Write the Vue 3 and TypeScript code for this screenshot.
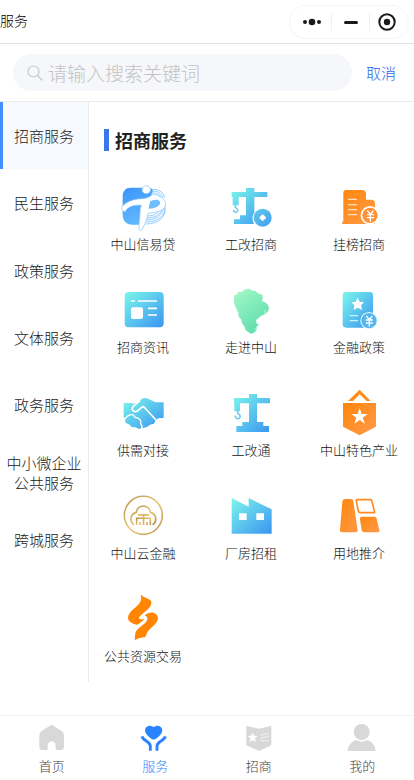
<script setup lang="ts">
import { ref } from 'vue'

interface Service {
  icon: string
  label: string
}

const keyword = ref('')
const activeCategory = ref(0)
const activeTab = ref(1)

const categories: string[][] = [
  ['招商服务'],
  ['民生服务'],
  ['政策服务'],
  ['文体服务'],
  ['政务服务'],
  ['中小微企业', '公共服务'],
  ['跨城服务'],
]

const services: Service[] = [
  { icon: 'credit', label: '中山信易贷' },
  { icon: 'crane-coin', label: '工改招商' },
  { icon: 'building', label: '挂榜招商' },
  { icon: 'news', label: '招商资讯' },
  { icon: 'map', label: '走进中山' },
  { icon: 'policy', label: '金融政策' },
  { icon: 'handshake', label: '供需对接' },
  { icon: 'crane', label: '工改通' },
  { icon: 'badge', label: '中山特色产业' },
  { icon: 'cloud', label: '中山云金融' },
  { icon: 'factory', label: '厂房招租' },
  { icon: 'land', label: '用地推介' },
  { icon: 'trade', label: '公共资源交易' },
]

const tabs: Service[] = [
  { icon: 'home', label: '首页' },
  { icon: 'care', label: '服务' },
  { icon: 'invest', label: '招商' },
  { icon: 'user', label: '我的' },
]
</script>

<template>
  <div class="page">
    <svg class="sprite" aria-hidden="true">
      <defs>
        <linearGradient id="g-blue" x1="0" y1="0" x2="1" y2="1">
          <stop offset="0" stop-color="#7bf7ea" />
          <stop offset="1" stop-color="#3b94f2" />
        </linearGradient>
        <linearGradient id="g-coin" x1="0" y1="0" x2="1" y2="1">
          <stop offset="0" stop-color="#62cdea" />
          <stop offset="1" stop-color="#429cf0" />
        </linearGradient>
        <linearGradient id="g-green" x1="0" y1="0" x2="0.6" y2="1">
          <stop offset="0" stop-color="#a5fac6" />
          <stop offset="1" stop-color="#60dcae" />
        </linearGradient>
        <linearGradient id="g-orange" x1="0" y1="0" x2="1" y2="1">
          <stop offset="0" stop-color="#ff860c" />
          <stop offset="1" stop-color="#ff9a4a" />
        </linearGradient>
        <linearGradient id="g-sky" x1="0" y1="0" x2="0.4" y2="1">
          <stop offset="0" stop-color="#3b93fb" />
          <stop offset="1" stop-color="#62b9ff" />
        </linearGradient>
        <linearGradient id="g-gold" x1="0" y1="0" x2="1" y2="1">
          <stop offset="0" stop-color="#b98b45" />
          <stop offset="0.5" stop-color="#e9c878" />
          <stop offset="1" stop-color="#b98b45" />
        </linearGradient>
      </defs>

      <symbol id="credit" viewBox="42 24 144 144">
        <g fill="none" stroke="#7cc3ff" stroke-width="2.5">
          <path d="M136 44c22-4 39 6 43 24M138 49c19-3 32 6 36 20M140 54c15-2 26 5 29 17" />
          <path d="M181 100c0 24-16 46-58 47M180 92c1 28-16 48-56 49M175 98c-3 22-19 36-51 37M170 104c-5 15-18 25-45 25M160 111c-7 8-17 12-34 12" />
        </g>
        <path d="M78 38h54c7 0 11 4 11 11l-18 54-7 46H83c-21 0-30-12-30-32V66c0-18 8-28 25-28Z" fill="url(#g-sky)" />
        <g fill="#fff" stroke="#7cc3ff" stroke-width="2" stroke-linejoin="round">
          <path d="M50 97c10-16 34-25 60-26 14 0 25-5 34-14 20 5 38 15 38 30 0 17-22 26-52 27-3 17-11 35-19 50-3 4-8 3-9-1-2-14 3-32 3-48 0-8 1-17 4-24-16-2-30 1-39 8-6 5-9 7-7 12-10-2-15-8-13-14Z" />
          <ellipse cx="124" cy="44" rx="13" ry="12" />
        </g>
        <path d="M130 101l6-22c7-5 26-9 29 2 2 12-14 20-35 20Z" fill="#6fbdff" />
      </symbol>

      <symbol id="crane-coin" viewBox="36 24 144 144">
        <path d="M50 51h43V39h25v12h39v15h-39v47c-7 9-7 22-1 34H57v-14h18v-12h18V66H71v25H53V66h-3Z" fill="url(#g-blue)" />
        <path d="M61 90v7c7 4 9 8 6 12-4 6-13 1-11-4" fill="none" stroke="#6acdf0" stroke-width="4.5" />
        <circle cx="143" cy="128" r="27" fill="url(#g-coin)" />
        <path d="m143 120 8 8-8 8-8-8Z" fill="#fff" stroke="#fff" stroke-width="4" stroke-linejoin="round" />
      </symbol>

      <symbol id="building" viewBox="60 24 144 144">
        <path d="M94 45h47q12 0 12 12v17h16q11 0 11 12v61H81q0-7 4-9V55q0-10 9-10Z" fill="url(#g-orange)" />
        <path d="M100 73h24M100 89h24M100 104h24M100 119h24" stroke="#ffe2c4" stroke-width="4" stroke-linecap="round" />
        <circle cx="165" cy="121" r="28" fill="#fff" />
        <circle cx="165" cy="121" r="23" fill="#ff9137" />
        <path d="m158 108 8 10 8-10M166 118v20M157 119h19M157 128h19" fill="none" stroke="#fff" stroke-width="4" stroke-linecap="round" />
      </symbol>

      <symbol id="news" viewBox="42 18 144 144">
        <rect x="59" y="36" width="117" height="106" rx="12" fill="url(#g-blue)" />
        <path d="M78 63h12M99 63h57M129 85h27M129 105h27" stroke="#fff" stroke-width="5" />
        <rect x="78" y="82" width="36" height="35" rx="6" fill="#fff" />
      </symbol>

      <symbol id="map" viewBox="366 18 144 144">
        <path d="m388 46 8-1 4-9 10 1 8-7 13-4 10 6 10 1 9 8 12 4 1 11-3 8 7 2 10 6 5 11-3 11-9 9-12 4-8 8-7 5 1 9 8 7-7 2-1 11-5 8-10 4-8-4-9-7-3-10-7-9-3-12-8-10-1-11-5-11-5-10-3-12Z" fill="url(#g-green)" stroke="#98eec3" stroke-linejoin="round" />
        <path d="M480 90v15M448 147h4" stroke="#edfff7" stroke-width="2" />
      </symbol>

      <symbol id="policy" viewBox="120 18 144 144">
        <path d="M153 36h72q9 0 9 9v98h-81q-10 0-10-10V46q0-10 10-10Z" fill="url(#g-blue)" />
        <path d="m188 53 6 12 13 2-9 9 3 14-13-7-12 7 2-14-9-9 13-2Z" fill="#fff" />
        <path d="M166 107h22M166 122h22" stroke="#c8f4fa" stroke-width="4" stroke-linecap="round" />
        <circle cx="222" cy="122" r="26" fill="#e8fbff" />
        <circle cx="222" cy="122" r="23" fill="#57b7ed" />
        <path d="m215 109 8 10 8-10M223 119v19M214 120h18M214 129h18" fill="none" stroke="#fff" stroke-width="4" stroke-linecap="round" />
      </symbol>

      <symbol id="handshake" viewBox="42 27 144 144">
        <path d="M56 69h22l8 2 12-3 12-11q7-4 16-2l26 12h24v47l-16 1-8 6-5 10-12 3-8 6-14 5-13 1-8-4-12-1-8-8-10-4-2-9 3-6-7-1Z" fill="url(#g-blue)" />
        <path d="M105 62 84 80c-7 9 3 19 13 13l16-13 4 1 36 39" fill="none" stroke="#fff" stroke-width="5" stroke-linejoin="round" />
        <path d="M60 116c11-14 25-17 30-4 14 2 19 9 17 19 5 5 6 9 3 17" fill="none" stroke="#fff" stroke-width="4" />
      </symbol>

      <symbol id="crane" viewBox="366 27 144 144">
        <path d="M387 54h45V42h24v12h39v16h-39v56h19v12h17v18h-98v-18h18v-12h20V70h-27v24h-17V70h-1Z" fill="url(#g-blue)" />
        <path d="M398 91v9c7 4 9 7 7 12-3 7-15 4-14-5" fill="none" stroke="#66c9f1" stroke-width="4.5" />
      </symbol>

      <symbol id="badge" viewBox="105 27 144 144">
        <path d="m144 63 35-34 33 34h-12l-21-20-20 20Z" fill="#ff8b19" />
        <path d="M129 69h99v71l-49 26-50-26Z" fill="url(#g-orange)" />
        <path d="m179 84 6 18h18l-15 11 7 18-16-11-16 11 6-18-15-11h19Z" fill="#fff" />
      </symbol>

      <symbol id="cloud" viewBox="57 21 144 144">
        <g fill="none" stroke="url(#g-gold)">
          <circle cx="130" cy="91" r="57" stroke-width="4.5" />
          <path d="M102 119c-14-8-12-33 7-37 3-25 39-25 42 0 19 4 21 29 7 37" stroke-width="5" />
          <path d="M110 120v-20h41v20M120 120v-9M141 120v-9" stroke-width="4.5" />
        </g>
        <path d="M114 87h33v5h-14v28h-5V92h-14Z" fill="#ddb665" />
      </symbol>

      <symbol id="factory" viewBox="381 21 144 144">
        <path d="m395 39 51 26V39l69 34v73H395Z" fill="url(#g-blue)" />
        <path d="M417 85h23v20h-23ZM469 85h23v20h-23Z" fill="#fff" />
      </symbol>

      <symbol id="land" viewBox="105 336 144 144">
        <path d="M134 357h18q7 0 8 6l13 88q1 6-5 6h-42q-7 0-6-7l7-85q1-8 7-8Z" fill="url(#g-orange)" />
        <path d="M171 359h39q5 0 6 5l8 34h-43q-5 0-6-5l-6-29q-1-5 2-5Z" fill="#fff" stroke="#ff8c21" stroke-width="5" stroke-linejoin="round" />
        <path d="M186 410h37q6 0 7 6l8 34q1 7-6 7h-39q-7 0-8-6l-5-33q-1-8 6-8Z" fill="url(#g-orange)" />
      </symbol>

      <symbol id="trade" viewBox="57 330 144 144">
        <g fill="#ff8503">
          <path d="M121 328C130 337 145 340 153 347C157 358 150 368 140 376L121 392C115 397 117 402 122 403L134 403L113 419C98 417 84 410 84 398C85 386 95 376 108 366C122 354 127 343 121 328Z" />
          <path d="M134 391C142 385 150 382 160 383C170 386 176 394 173 404C170 415 158 424 148 434C140 441 140 450 135 457C124 457 113 460 104 466C105 455 104 445 109 437C116 428 130 420 138 411C144 403 144 396 134 391Z" />
        </g>
      </symbol>

      <symbol id="home" viewBox="107 51 96 96">
        <path d="M149 62q5-4 10 0l25 16q7 5 7 14v33q0 10-11 10h-14v-13c0-18-24-18-24 0v13h-14q-11 0-11-10V92q0-9 7-14Z" fill="currentColor" />
      </symbol>

      <symbol id="care" viewBox="418 51 96 96">
        <path d="M462 67c15-13 34 3 22 20-6 8-16 16-22 17-6-1-16-9-22-17-12-17 7-33 22-20Z" fill="currentColor" />
        <path d="M427 94c3 14 25 15 25 29v14M497 94c-3 14-25 15-25 29v14" fill="none" stroke="currentColor" stroke-width="8.5" />
      </symbol>

      <symbol id="invest" viewBox="728 51 96 96">
        <path d="m738 62 38 9 37-9v59q-17 8-37 17-20-9-38-17Z" fill="currentColor" />
        <path d="m757 85 4 8 9 1-7 6 2 9-8-4-8 4 2-9-7-6 9-1ZM781 91l24-6M781 100l24-6M781 107h24" fill="#fff" stroke="#fff" stroke-width="2" />
      </symbol>

      <symbol id="user" viewBox="1039 51 96 96">
        <circle cx="1086" cy="81" r="24" fill="currentColor" />
        <path d="M1044 138c1-17 11-28 26-33 10 6 22 6 32 0 15 5 25 16 26 33Z" fill="currentColor" />
      </symbol>
    </svg>

    <header class="titlebar">
      <h1>服务</h1>
      <div class="capsule">
        <button type="button" aria-label="更多">
          <svg viewBox="0 0 20 20"><circle cx="3" cy="10" r="2" /><circle cx="10" cy="10" r="3.3" /><circle cx="17" cy="10" r="2" /></svg>
        </button>
        <button type="button" aria-label="最小化">
          <svg viewBox="0 0 20 20"><rect x="3" y="9" width="14" height="3" rx="1.5" /></svg>
        </button>
        <button type="button" aria-label="关闭">
          <svg viewBox="0 0 20 20"><circle cx="10" cy="10" r="7.7" fill="none" stroke="#1a1a1a" stroke-width="2" /><circle cx="10" cy="10" r="3.2" /></svg>
        </button>
      </div>
    </header>

    <form class="search" @submit.prevent>
      <label class="field">
        <svg viewBox="0 0 16 16" fill="none" stroke="#c8c8c8" stroke-width="1.2">
          <circle cx="6.5" cy="6.5" r="5.5" />
          <path d="m10.5 10.5 5 5" />
        </svg>
        <input v-model="keyword" type="text" placeholder="请输入搜索关键词" aria-label="搜索" />
      </label>
      <button type="button" class="cancel" @click="keyword = ''">取消</button>
    </form>

    <div class="body">
      <nav class="side">
        <div class="side-list">
          <button
            v-for="(lines, i) in categories"
            :key="i"
            type="button"
            :class="{ active: i === activeCategory }"
            @click="activeCategory = i"
          >
            <span v-for="line in lines" :key="line">{{ line }}</span>
          </button>
        </div>
      </nav>

      <main class="content">
        <h2>招商服务</h2>
        <div class="grid">
          <a v-for="s in services" :key="s.icon" href="#" class="service">
            <svg><use :href="'#' + s.icon" /></svg>
            <span>{{ s.label }}</span>
          </a>
        </div>
      </main>
    </div>

    <nav class="tabbar">
      <a
        v-for="(t, i) in tabs"
        :key="t.icon"
        href="#"
        :class="{ active: i === activeTab }"
        @click.prevent="activeTab = i"
      >
        <svg><use :href="'#' + t.icon" /></svg>
        <span>{{ t.label }}</span>
      </a>
    </nav>
  </div>
</template>

<style>
body {
  background: #fff;
}
</style>

<style scoped>
.page {
  min-height: 100vh;
  display: flex;
  flex-direction: column;
  color: #111;
  font-family: "Noto Sans CJK SC", sans-serif;
  font-weight: 300;
}
.page * {
  box-sizing: border-box;
}
.sprite {
  position: absolute;
  width: 0;
  height: 0;
}
button {
  padding: 0;
  border: 0;
  background: none;
  color: inherit;
  font: inherit;
  cursor: pointer;
}
a {
  color: inherit;
  text-decoration: none;
}
.titlebar {
  height: 44px;
  display: flex;
  align-items: center;
  justify-content: space-between;
  padding-right: 5px;
  border-bottom: 1px solid #e3e3e3;
}
h1 {
  margin: 0;
  padding-bottom: 3px;
  font-size: 14px;
  font-weight: 300;
  line-height: 20px;
  color: #000;
}
.capsule {
  display: grid;
  grid-template-columns: 38px 38px 1fr;
  align-items: center;
  width: 120px;
  height: 34px;
  padding: 0 5px 0 3px;
  border: 1px solid #f5f5f5;
  border-radius: 17px;
}
.capsule button {
  display: flex;
  align-items: center;
  justify-content: center;
  height: 18px;
}
.capsule button + button {
  border-left: 1px solid #f0f0f0;
}
.capsule svg {
  width: 20px;
  height: 20px;
  fill: #1a1a1a;
}
.search {
  display: flex;
  align-items: center;
  height: 58px;
  padding: 0 18px 0 13px;
  border-bottom: 1px solid #ebebeb;
}
.field {
  flex: 1;
  min-width: 0;
  display: flex;
  align-items: center;
  gap: 5px;
  height: 37px;
  padding: 0 14px;
  border-radius: 19px;
  background: #f6f7fa;
}
.field svg {
  flex: none;
  width: 16px;
  height: 16px;
}
.field input {
  flex: 1;
  min-width: 0;
  height: 28px;
  padding: 0;
  border: 0;
  outline: 0;
  background: none;
  color: #333;
  font: inherit;
  font-size: 19px;
}
.field input::placeholder {
  color: #c4c4c4;
  opacity: 1;
}
.cancel {
  margin-left: 14px;
  color: #2468e8;
  font-size: 15px;
}
.body {
  flex: 1;
  display: flex;
  align-items: flex-start;
  padding-bottom: 33px;
}
.side {
  flex: none;
  align-self: stretch;
  width: 89px;
  border-right: 1px solid #ebebeb;
}
.side-list {
  display: grid;
  grid-template-rows: repeat(7, 1fr);
  height: 472px;
}
.side-list button {
  display: flex;
  flex-direction: column;
  align-items: center;
  justify-content: center;
  border-left: 3px solid transparent;
  padding-right: 3px;
  font-size: 15px;
  line-height: 20px;
  color: #1a1a1a;
  white-space: nowrap;
}
.side-list .active {
  border-left-color: #458eff;
  background: #f6faff;
}
.content {
  flex: 1;
  min-width: 0;
  padding: 24px 1px 16px 0;
}
h2 {
  display: flex;
  align-items: center;
  gap: 6px;
  margin: 0 0 0 15px;
  color: #222;
  font-size: 18px;
  font-weight: 700;
  line-height: 28px;
}
h2::before {
  content: "";
  width: 5px;
  height: 22px;
  background: #3a78ea;
}
.grid {
  display: grid;
  grid-template-columns: repeat(3, 1fr);
  grid-auto-rows: 71px;
  row-gap: 32px;
  margin-top: 29px;
}
.service {
  display: flex;
  flex-direction: column;
  align-items: center;
  gap: 4px;
  font-size: 13px;
  line-height: 18px;
  white-space: nowrap;
}
.service svg {
  width: 48px;
  height: 48px;
}
.tabbar {
  display: grid;
  grid-template-columns: repeat(4, 1fr);
  height: 65px;
  padding-top: 6px;
  border-top: 1px solid #f3f3f3;
}
.tabbar a {
  display: flex;
  flex-direction: column;
  align-items: center;
  gap: 2px;
  font-size: 13px;
  line-height: 20px;
  color: #444;
}
.tabbar svg {
  width: 32px;
  height: 32px;
  color: #d8d8d8;
}
.tabbar .active,
.tabbar .active svg {
  color: #2a84ff;
}
</style>
